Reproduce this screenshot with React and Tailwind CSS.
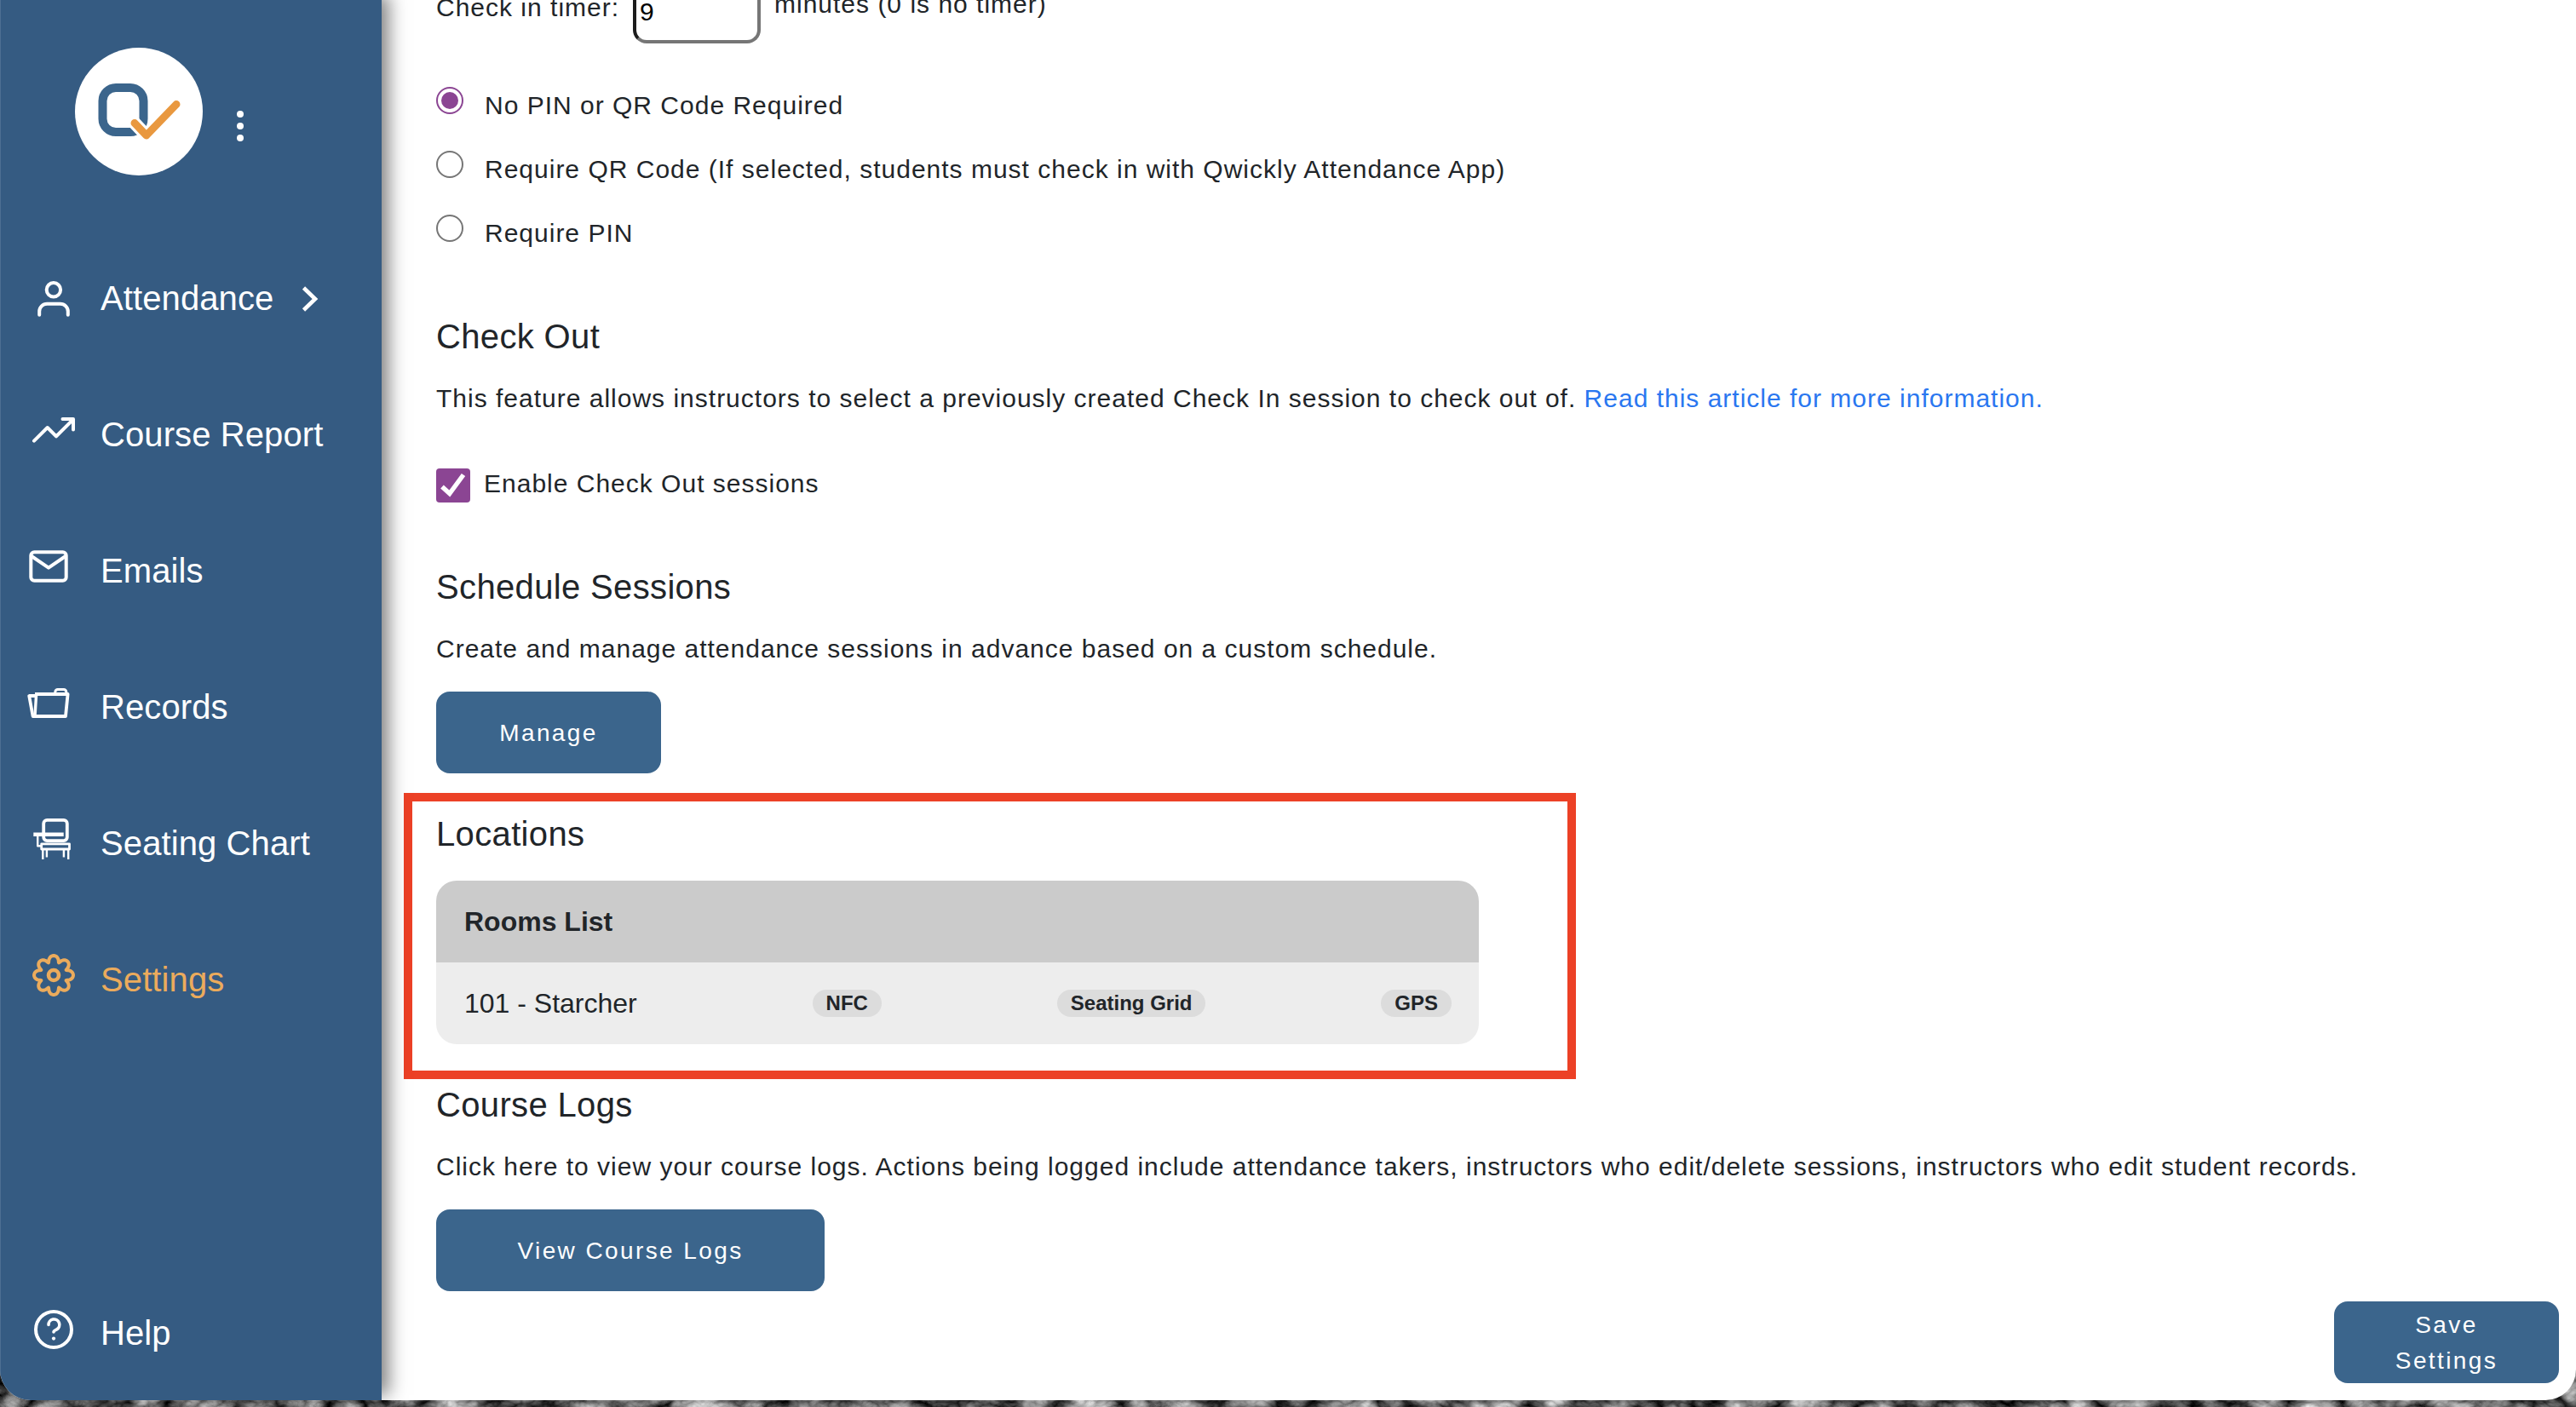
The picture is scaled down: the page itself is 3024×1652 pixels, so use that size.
import { useState } from 'react';

// outline of the settings cog, eight rounded lobes around (39, 27)
const cogPath = () => {
  const points = [];
  for (let i = 0; i < 160; i++) {
    const t = (i / 160) * Math.PI * 2;
    const r = 19.4 + 3.6 * Math.cos(8 * t);
    const a = t + 0.085 * Math.sin(8 * t);
    points.push(`${(39 + r * Math.cos(a)).toFixed(2)} ${(27 + r * Math.sin(a)).toFixed(2)}`);
  }
  return `M${points.join('L')}Z`;
};

const NavIcon = ({ children }) => (
  <svg className="w-[72px] h-16 shrink-0" viewBox="0 0 72 64" fill="none" stroke="currentColor" strokeWidth="4" strokeLinecap="round" strokeLinejoin="round">
    {children}
  </svg>
);

const navItems = [
  {
    label: 'Attendance',
    hasMenu: true,
    icon: (
      <>
        <circle cx="38.9" cy="22.3" r="8.2" />
        <path d="M22.2 51.7v-4a9 9 0 0 1 9-9h15.6a9 9 0 0 1 9 9v4" />
      </>
    ),
  },
  {
    label: 'Course Report',
    icon: <path d="M16 39.7 31.7 24 42 34.3 62 14.3M49.5 14H62v12.5" />,
  },
  {
    label: 'Emails',
    icon: (
      <>
        <rect x="12.3" y="10.3" width="41.4" height="33.4" rx="4" />
        <path d="M13 15 33 28.7 53 15" />
      </>
    ),
  },
  {
    label: 'Records',
    icon: (
      <g strokeLinecap="butt" strokeLinejoin="miter">
        <path d="M17 17h38.6L53 43H14.6L10.2 19H18" strokeWidth="3.8" strokeLinejoin="round" />
        <path d="M18.6 17 17 43" strokeWidth="3.4" />
        <path d="M40.8 16v-1.5a3 3 0 0 1 3-3h7a3 3 0 0 1 3 3V16" strokeWidth="3" />
      </g>
    ),
  },
  {
    label: 'Seating Chart',
    icon: (
      <g strokeLinecap="butt">
        <rect x="27.2" y="4.9" width="27.6" height="24.2" rx="4" strokeWidth="3.8" />
        <path d="M15.3 21.8h35.4" strokeWidth="4.4" />
        <path d="M20.2 24v11.3H24" strokeWidth="2.4" />
        <rect x="24.7" y="32.8" width="32.8" height="6.2" strokeWidth="2.8" />
        <path d="M26.3 40v11M56.2 40v11M30.9 40v8.6M50.9 40v8.6" strokeWidth="2.4" />
      </g>
    ),
  },
  {
    label: 'Settings',
    active: true,
    icon: (
      <>
        <path d={cogPath()} />
        <circle cx="39" cy="27" r="6" strokeWidth="4.6" />
      </>
    ),
  },
];

const Logo = () => (
  <svg className="w-[150px] h-[150px]" viewBox="0 0 150 150" fill="none">
    <circle cx="75" cy="75" r="75" fill="#fff" />
    <rect x="32.5" y="47" width="48" height="52" rx="15.5" stroke="#3b658c" strokeWidth="10" />
    <path d="M70 88.5 83.8 103 119 66.5" stroke="#fff" strokeWidth="15" strokeLinecap="round" strokeLinejoin="round" />
    <path d="M70 88.5 83.8 103 119 66.5" stroke="#e9983f" strokeWidth="9" strokeLinecap="round" strokeLinejoin="round" />
  </svg>
);

const Sidebar = () => (
  <aside className="relative z-10 w-[448px] h-full shrink-0 flex flex-col bg-[#355b82] text-white border-l border-[#4d6f92] shadow-[8px_-6px_20px_rgba(0,0,0,0.5)]">
    <div className="flex pl-[87px] pt-14 h-[318px]">
      <Logo />
      <button className="flex flex-col gap-1.5 ml-10 mt-[74px] h-9" aria-label="More options">
        <span className="w-2 h-2 rounded-full bg-white" />
        <span className="w-2 h-2 rounded-full bg-white" />
        <span className="w-2 h-2 rounded-full bg-white" />
      </button>
    </div>

    <nav className="flex flex-col gap-24 pl-[23px]">
      {navItems.map((item) => (
        <a key={item.label} className={`flex items-center h-16 text-[40px] leading-[48px] tracking-[0.1px] ${item.active ? 'text-[#ebab5c]' : ''}`}>
          <NavIcon>{item.icon}</NavIcon>
          <span className="ml-[22px]">{item.label}</span>
          {item.hasMenu && (
            <svg className="w-5 h-8 ml-[33px]" viewBox="0 0 20 32" fill="none" stroke="currentColor" strokeWidth="4.6">
              <path d="M2.5 4 16 17 2.5 30" />
            </svg>
          )}
        </a>
      ))}
    </nav>

    <a className="flex items-center h-16 mt-auto mb-[47px] pl-[23px] text-[40px] leading-[48px] tracking-[0.1px]">
      <NavIcon>
        <circle cx="39" cy="28" r="21" />
        <path d="M33 22.5a6.4 6.4 0 1 1 9.6 5.4c-2 1-3.6 1.8-3.6 3" strokeWidth="3.6" />
        <circle cx="39" cy="38.6" r="2.1" fill="currentColor" stroke="none" />
      </NavIcon>
      <span className="ml-[22px]">Help</span>
    </a>
  </aside>
);

const pinOptions = [
  'No PIN or QR Code Required',
  'Require QR Code (If selected, students must check in with Qwickly Attendance App)',
  'Require PIN',
];

const Heading = ({ className, children }) => (
  <h2 className={`text-[40px] leading-[48px] tracking-[0.35px] ${className}`}>{children}</h2>
);

const Text = ({ className, children }) => (
  <p className={`text-[30px] leading-[45px] tracking-[1px] whitespace-nowrap ${className}`}>{children}</p>
);

const Button = ({ className, children }) => (
  <button className={`h-24 shrink-0 rounded-2xl bg-[#3b658c] text-white text-[28px] leading-[42px] tracking-[2.4px] pt-px ${className}`}>
    {children}
  </button>
);

const Badge = ({ children }) => (
  <span className="h-8 px-4 rounded-full bg-[#dcdcdc] text-2xl leading-8 font-bold">{children}</span>
);

const App = () => {
  const [pinOption, setPinOption] = useState(0);
  const [checkOut, setCheckOut] = useState(true);

  return (
    <div className="relative w-[3024px] h-[1652px] overflow-hidden bg-[#2b2b2b] font-['Liberation_Sans',Arial,sans-serif]">
      {/* desktop wallpaper behind the window */}
      <svg className="absolute inset-x-0 bottom-0 w-full h-20">
        <filter id="marble" colorInterpolationFilters="sRGB">
          <feTurbulence type="turbulence" baseFrequency="0.02 0.03" numOctaves="4" seed="7" />
          <feColorMatrix values="1.3 0 0 0 -0.06  1.3 0 0 0 -0.06  1.3 0 0 0 -0.06  0 0 0 0 1" />
        </filter>
        <rect width="100%" height="100%" filter="url(#marble)" />
      </svg>

      <div className="relative flex h-[1644px] rounded-b-[36px] overflow-hidden bg-white text-[#212529]">
        <Sidebar />

        <main className="relative flex-1 flex flex-col items-start pl-16">
          <div className="flex items-start -mt-10 h-[91px]">
            <Text className="pt-[26px] w-[231px]">Check in timer:</Text>
            <input
              className="w-[150px] h-[91px] pl-1 pt-[17px] text-[30px] text-black bg-white rounded-2xl border-4 border-l-[#1c1c1c] border-t-[#1c1c1c] border-r-[#767676] border-b-[#767676]"
              defaultValue="9"
            />
            <Text className="pt-[22px] ml-4">minutes (0 is no timer)</Text>
          </div>

          <div className="flex flex-col gap-[30px] mt-[50px]">
            {pinOptions.map((option, i) => (
              <label key={option} className="flex items-start h-[45px]" onClick={() => setPinOption(i)}>
                <span className={`flex items-center justify-center w-8 h-8 mt-px rounded-full border-2 ${pinOption === i ? 'border-[#8b4593]' : 'border-[#767676]'}`}>
                  {pinOption === i && <span className="w-5 h-5 rounded-full bg-[#8b4593]" />}
                </span>
                <Text className="ml-[25px]">{option}</Text>
              </label>
            ))}
          </div>

          <Heading className="mt-[75px]">Check Out</Heading>
          <Text className="mt-[26px]">
            This feature allows instructors to select a previously created Check In session to check out of.{' '}
            <a className="text-[#2a77f0]">Read this article for more information.</a>
          </Text>
          <label className="flex items-end mt-[55px] h-[45px]" onClick={() => setCheckOut(!checkOut)}>
            <span className="flex w-10 h-10 rounded bg-[#8b4593]">
              {checkOut && (
                <svg viewBox="0 0 40 40" fill="none" stroke="#fff" strokeWidth="5.4">
                  <path d="M7 21.5 15.8 29.5 32 7.5" />
                </svg>
              )}
            </span>
            <Text className="ml-4">Enable Check Out sessions</Text>
          </label>

          <Heading className="mt-[75px]">Schedule Sessions</Heading>
          <Text className="mt-[26px]">Create and manage attendance sessions in advance based on a custom schedule.</Text>
          <Button className="w-[264px] mt-7">Manage</Button>

          <Heading className="mt-[47px]">Locations</Heading>
          <div className="w-[1224px] mt-[31px] rounded-3xl overflow-hidden text-[32px] leading-[48px]">
            <div className="flex items-center h-24 pl-[33px] pr-8 bg-[#cbcbcb] font-bold">Rooms List</div>
            <div className="flex items-center justify-between h-24 pl-[33px] pr-8 bg-[#ededed]">
              <span>101 - Starcher</span>
              <Badge>NFC</Badge>
              <Badge>Seating Grid</Badge>
              <Badge>GPS</Badge>
            </div>
          </div>

          <Heading className="mt-[47px]">Course Logs</Heading>
          <Text className="mt-[26px]">
            Click here to view your course logs. Actions being logged include attendance takers, instructors who edit/delete sessions, instructors who edit student records.
          </Text>
          <Button className="w-[456px] mt-7">View Course Logs</Button>

          <Button className="w-[264px] mt-3 mr-5 px-12 self-end">Save Settings</Button>

          {/* highlight around the locations section */}
          <div className="absolute left-[26px] top-[931px] w-[1376px] h-[336px] border-[10px] border-[#ec4126] pointer-events-none" />
        </main>
      </div>
    </div>
  );
};

export default App;
